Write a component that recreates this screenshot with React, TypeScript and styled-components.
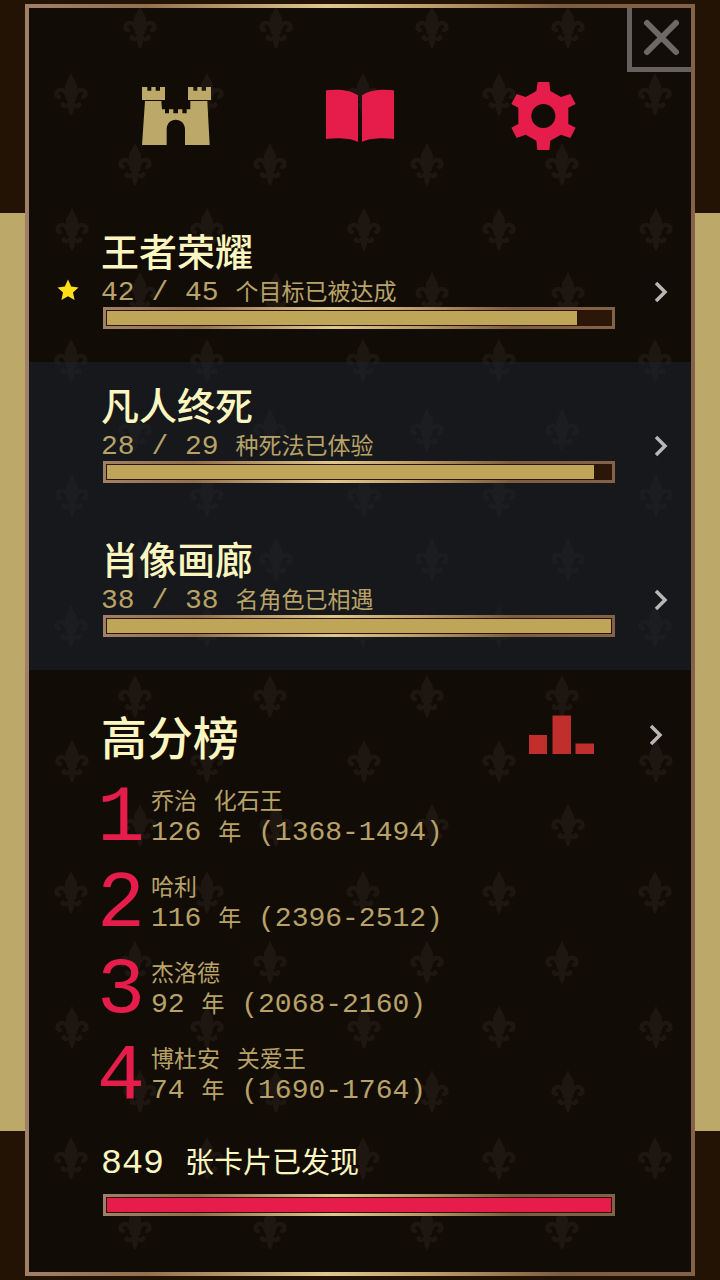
import React from "react";
import styled, { createGlobalStyle } from "styled-components";

const cjk = `"Noto Sans CJK SC", sans-serif`;
const mono = `"Liberation Mono", "Noto Sans CJK SC", monospace`;
const metal =
  "linear-gradient(90deg, #a08068 0%, #93704f 18%, #e0c78e 45%, #bf9f6c 60%, #7d5d40 80%, #84624a 100%)";

const GlobalStyle = createGlobalStyle`
  * { box-sizing: border-box; }
  body { margin: 0; background: #231304; font-family: ${cjk}; }
  button { margin: 0; padding: 0; border: 0; background: none; color: inherit; font: inherit; text-align: left; cursor: pointer; }
  h2, p, ol { margin: 0; padding: 0; font-weight: inherit; }
  svg { display: block; }
`;

const Page = styled.div`
  min-height: 100vh;
  display: flex;
  padding: 4px 25px;
  background: linear-gradient(#bca868, #bca868) 0 213px / 100% calc(100% - 362px) no-repeat #231304;
`;

const Panel = styled.main`
  position: relative;
  flex: 1;
  border: 4px solid #93704f;
  border-image: ${metal} 4;
  background: #120c07;
`;

const Backdrop = styled.svg`
  position: absolute;
  inset: 0;
  width: 100%;
  height: 100%;
`;

const Content = styled.div`
  position: relative;
`;

const CloseButton = styled.button`
  position: absolute;
  top: 0;
  right: 0;
  z-index: 1;
  width: 64px;
  height: 64px;
  display: grid;
  place-items: center;
  border-left: 5px solid #66615e;
  border-bottom: 5px solid #66615e;
  background: #120d08;
`;

const Tabs = styled.nav`
  display: flex;
  justify-content: center;
  gap: 84px;
  height: 200px;
  padding: 58px 0;
`;

const TabButton = styled.button`
  display: grid;
  place-items: center;
  width: 100px;
  height: 100px;
`;

const Row = styled.button<{ $shaded?: boolean }>`
  display: grid;
  grid-template-columns: 72px 1fr 76px;
  grid-template-rows: 44px 35px 22px;
  align-items: center;
  width: 100%;
  padding: 20px 0 33px;
  background: ${(p) => (p.$shaded ? "rgba(25, 34, 44, 0.6)" : "none")};
`;

const RowTitle = styled.span`
  grid-area: 1 / 2;
  color: #fbf6c0;
  font-size: 38px;
  font-weight: 500;
  line-height: 44px;
`;

const RowDetail = styled.span`
  grid-area: 2 / 2;
  color: #b8a267;
  font-size: 23px;
  line-height: 30px;
  white-space: pre;
`;

const StarSlot = styled.span`
  grid-area: 2 / 1;
  padding-left: 28px;
`;

const ChevronSlot = styled.span`
  grid-area: 2 / 3;
  justify-self: end;
  padding: 5px 18px 0 0;
`;

const Num = styled.span`
  font-family: ${mono};
  font-size: 28px;
  line-height: 0;
`;

const Track = styled.span`
  grid-area: 3 / 2;
  display: block;
  height: 22px;
  margin-left: 2px;
  padding: 1px;
  border: 3px solid #93704f;
  border-image: ${metal} 3;
  background: #2c1608;
`;

const Fill = styled.span<{ $color: string }>`
  display: block;
  height: 14px;
  background: ${(p) => p.$color};
`;

const ScoreHeader = styled.button`
  display: flex;
  align-items: center;
  width: 100%;
  padding: 37px 23px 0 72px;
`;

const ScoreTitle = styled.h2`
  flex: 1;
  color: #fbf6c0;
  font-size: 46px;
  font-weight: 500;
  line-height: 56px;
`;

const ChartSlot = styled.span`
  padding-right: 50px;
`;

const ScoreList = styled.ol`
  display: grid;
  gap: 24px;
  padding: 21px 0 0 68px;
  list-style: none;
`;

const ScoreItem = styled.li`
  display: grid;
  grid-template-columns: 48px 1fr;
  column-gap: 6px;
  height: 62px;
`;

const Rank = styled.span`
  color: #e61d4b;
  font-family: ${mono};
  font-size: 80px;
  line-height: 70px;
`;

const ScoreText = styled.p`
  color: #b8a267;
  font-size: 23px;
  line-height: 31px;
  white-space: pre;
`;

const Cards = styled.section`
  padding: 36px 76px 56px 72px;
`;

const CardsText = styled.p`
  margin-bottom: 14px;
  color: #fbf6c0;
  font-size: 29px;
  line-height: 40px;
  white-space: pre;
`;

const CardsNum = styled(Num)`
  font-size: 35px;
`;

const fleurs = [
  [140, 28], [276, 28], [-16, 28],
  [71, 95], [207, 95],
  [135, 165], [270, 165], [-22, 165],
  [72, 230], [207, 230],
];

function FleurBackdrop() {
  return (
    <Backdrop aria-hidden="true">
      <defs>
        <g id="fleur">
          <path d="M0-22C2-16 6-13 6-8C6-4 3-1 2 5H-2C-3-1-6-4-6-8C-6-13-2-16 0-22Z" />
          <path
            d="M3 4C4-3 8-6 11-5C15-4 16 1 12 2M-3 4C-4-3-8-6-11-5C-15-4-16 1-12 2"
            fill="none"
            stroke="#1e1711"
            strokeWidth="4"
            strokeLinecap="round"
          />
          <path d="M-5 3H5V6H-5Z" />
          <path d="M-3 6H3C4 10 6 10 7 7C11 7 12 12 7 13C5 14 4 12 3 12C3 15 2 18 0 21C-2 18-3 15-3 12C-4 12-5 14-7 13C-12 12-11 7-7 7C-6 10-4 10-3 6Z" />
        </g>
        <pattern id="fleurs" width="292" height="266" patternUnits="userSpaceOnUse" patternTransform="translate(-29 -8)">
          {fleurs.map(([x, y]) => (
            <use key={`${x},${y}`} href="#fleur" x={x} y={y} fill="#1e1711" />
          ))}
        </pattern>
      </defs>
      <rect width="100%" height="100%" fill="url(#fleurs)" />
    </Backdrop>
  );
}

const Chevron = () => (
  <svg width="24" height="24" viewBox="0 0 24 24" fill="none" stroke="#b9b6b5" strokeWidth="3.500">
    <path d="M7 3L16 12L7 21" />
  </svg>
);

const Star = () => (
  <svg width="22" height="22" viewBox="0 0 22 22" fill="#ffdd17">
    <path d="M11 0.500L14.200 7.600L21.500 8.500L16 13.600L17.600 21L11 17.300L4.400 21L6 13.600L0.500 8.500L7.800 7.600Z" />
  </svg>
);

const Castle = () => (
  <svg width="69" height="60" viewBox="66 48 207 180" fill="#bca868">
    <path d="M66 51H82V62H94V51H107V62H120V51H135V90H66Z" />
    <path d="M204 51H220V62H232V51H245V62H258V51H273V90H204Z" />
    <path d="M75 93H124L126 118H135V130H147V118H160V130H174V118H187V130H200V118H211V93H262L269 225H195V178C195 160 182 149 167 149C152 149 140 160 140 178V225H66Z" />
  </svg>
);

const Book = () => (
  <svg width="68" height="54" viewBox="618 57 204 162" fill="#e61d4b">
    <path d="M618 61C650 57 690 58 714 76V216C690 204 650 203 618 207Z" />
    <path d="M822 61C790 57 750 58 726 76V216C750 204 790 203 822 207Z" />
  </svg>
);

const Gear = () => (
  <svg width="66" height="70" viewBox="93 243 198 210" fill="#e61d4b" fillRule="evenodd">
    <path d="M173 246H208L211 273L243 291L271 282L287 312L265 323V372L287 383L271 414L243 404L211 422L208 450H172L169 422L137 404L110 414L94 383L115 372V323L94 312L110 282L137 291L169 273ZM190 312A36 36 0 1 0 190 384A36 36 0 1 0 190 312Z" />
  </svg>
);

const Chart = () => (
  <svg width="65" height="40" viewBox="0 0 65 40" fill="#c02f2b">
    <path d="M0 20H18V39H0ZM23.500 0.500H42V39H23.500ZM46.500 28.500H65V39H46.500Z" />
  </svg>
);

function Bar({ value, max, color, label }: { value: number; max: number; color: string; label: string }) {
  return (
    <Track role="progressbar" aria-label={label} aria-valuenow={value} aria-valuemax={max}>
      <Fill $color={color} style={{ width: `${(value / max) * 100}%` }} />
    </Track>
  );
}

const goals = [
  { title: "王者荣耀", value: 42, max: 45, text: "个目标已被达成", starred: true },
  { title: "凡人终死", value: 28, max: 29, text: "种死法已体验", shaded: true },
  { title: "肖像画廊", value: 38, max: 38, text: "名角色已相遇", shaded: true },
];

const scores = [
  { names: ["乔治", "化石王"], years: 126, span: "(1368-1494)" },
  { names: ["哈利"], years: 116, span: "(2396-2512)" },
  { names: ["杰洛德"], years: 92, span: "(2068-2160)" },
  { names: ["博杜安", "关爱王"], years: 74, span: "(1690-1764)" },
];

export default function App() {
  return (
    <>
      <GlobalStyle />
      <Page>
        <Panel>
          <FleurBackdrop />
          <CloseButton aria-label="关闭">
            <svg width="40" height="40" viewBox="0 0 40 40" stroke="#6e6968" strokeWidth="6" strokeLinecap="round">
              <path d="M5 5L34 34M34 5L5 34" />
            </svg>
          </CloseButton>
          <Content>
            <Tabs>
              <TabButton aria-label="王国"><Castle /></TabButton>
              <TabButton aria-label="书"><Book /></TabButton>
              <TabButton aria-label="设置"><Gear /></TabButton>
            </Tabs>
            {goals.map((g) => (
              <Row key={g.title} $shaded={g.shaded}>
                <RowTitle>{g.title}</RowTitle>
                {g.starred && <StarSlot><Star /></StarSlot>}
                <RowDetail>
                  <Num>{`${g.value} / ${g.max} `}</Num>
                  {g.text}
                </RowDetail>
                <ChevronSlot><Chevron /></ChevronSlot>
                <Bar value={g.value} max={g.max} color="#bfa557" label={g.title} />
              </Row>
            ))}
            <ScoreHeader>
              <ScoreTitle>高分榜</ScoreTitle>
              <ChartSlot><Chart /></ChartSlot>
              <Chevron />
            </ScoreHeader>
            <ScoreList>
              {scores.map((s, i) => (
                <ScoreItem key={s.span}>
                  <Rank>{i + 1}</Rank>
                  <div>
                    <ScoreText>
                      {s.names[0]}
                      {s.names[1] && <><Num> </Num>{s.names[1]}</>}
                    </ScoreText>
                    <ScoreText>
                      <Num>{`${s.years} `}</Num>年<Num>{` ${s.span}`}</Num>
                    </ScoreText>
                  </div>
                </ScoreItem>
              ))}
            </ScoreList>
            <Cards>
              <CardsText><CardsNum>{"849 "}</CardsNum>张卡片已发现</CardsText>
              <Bar value={849} max={849} color="#e61d4b" label="张卡片已发现" />
            </Cards>
          </Content>
        </Panel>
      </Page>
    </>
  );
}
